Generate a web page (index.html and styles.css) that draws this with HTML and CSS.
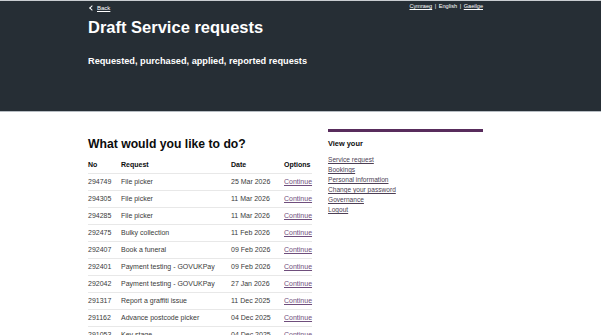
FILE: index.html
```html
<!DOCTYPE html>
<html lang="en">
<head>
  <meta charset="UTF-8" />
  <title>Draft Service requests</title>
  <meta name="viewport" content="width=device-width, initial-scale=1.0" />
  <link rel="stylesheet" href="styles.css">
</head>
<body>

  <header class="page-header">
    <div class="wrap">
      <div class="top-row">
        <a class="back-link" href="#">Back</a>
        <div class="lang-links">
          <a href="#">Cymraeg</a> <span class="sep">|</span> <span>English</span> <span class="sep">|</span> <a href="#">Gaeilge</a>
        </div>
      </div>
      <h1>Draft Service requests</h1>
      <p class="lead">Requested, purchased, applied, reported requests</p>
    </div>
  </header>

  <div class="wrap main">
    <div class="content">
      <h2>What would you like to do?</h2>

      <table class="requests">
        <thead>
          <tr>
            <th class="col-no">No</th>
            <th class="col-req">Request</th>
            <th class="col-date">Date</th>
            <th class="col-opt">Options</th>
          </tr>
        </thead>
        <tbody>
          <tr><td>294749</td><td>File picker</td><td>25 Mar 2026</td><td><a href="#">Continue</a></td></tr>
          <tr><td>294305</td><td>File picker</td><td>11 Mar 2026</td><td><a href="#">Continue</a></td></tr>
          <tr><td>294285</td><td>File picker</td><td>11 Mar 2026</td><td><a href="#">Continue</a></td></tr>
          <tr><td>292475</td><td>Bulky collection</td><td>11 Feb 2026</td><td><a href="#">Continue</a></td></tr>
          <tr><td>292407</td><td>Book a funeral</td><td>09 Feb 2026</td><td><a href="#">Continue</a></td></tr>
          <tr><td>292401</td><td>Payment testing - GOVUKPay</td><td>09 Feb 2026</td><td><a href="#">Continue</a></td></tr>
          <tr><td>292042</td><td>Payment testing - GOVUKPay</td><td>27 Jan 2026</td><td><a href="#">Continue</a></td></tr>
          <tr><td>291317</td><td>Report a graffiti issue</td><td>11 Dec 2025</td><td><a href="#">Continue</a></td></tr>
          <tr><td>291162</td><td>Advance postcode picker</td><td>04 Dec 2025</td><td><a href="#">Continue</a></td></tr>
          <tr><td>291053</td><td>Key stage</td><td>04 Dec 2025</td><td><a href="#">Continue</a></td></tr>
        </tbody>
      </table>
    </div>

    <aside class="sidebar">
      <h3>View your</h3>
      <ul class="side-links">
        <li><a href="#">Service request</a></li>
        <li><a href="#">Bookings</a></li>
        <li><a href="#">Personal information</a></li>
        <li><a href="#">Change your password</a></li>
        <li><a href="#">Governance</a></li>
        <li><a href="#">Logout</a></li>
      </ul>
    </aside>
  </div>

</body>
</html>
```

FILE: styles.css
```css
body {
  font-family: "Liberation Sans", Arial, sans-serif;
  margin: 0;
  padding: 0;
  background: #fff;
  color: #3a3a3a;
}

.wrap {
  width: 395px;
  margin-left: 88px;
}

.page-header {
  background: #262e35;
  color: #fff;
  height: 110px;
  border-top: 1px solid #c9cdd1;
  border-bottom: 1px solid #b7bdc3;
}

.top-row {
  display: flex;
  justify-content: space-between;
  align-items: flex-start;
  height: 15px;
}

.back-link {
  color: #fff;
  font-size: 6px;
  line-height: 8px;
  margin-top: 3px;
  text-decoration: underline;
  display: flex;
  align-items: center;
  gap: 3px;
}

.back-link::before {
  content: "";
  width: 3px;
  height: 3px;
  border-left: 1px solid #fff;
  border-bottom: 1px solid #fff;
  transform: rotate(45deg);
  margin-left: 2px;
}

.lang-links {
  font-size: 5.6px;
  line-height: 8px;
  margin-top: 1px;
  color: #fff;
}

.lang-links a {
  color: #fff;
}

.lang-links .sep {
  margin: 0 1px;
}

.page-header h1 {
  font-size: 16.5px;
  line-height: 20px;
  margin: 1px 0 0;
  font-weight: bold;
}

.lead {
  font-size: 9.2px;
  line-height: 12px;
  font-weight: bold;
  margin: 18px 0 0;
}

.main {
  display: flex;
  gap: 16px;
  padding-top: 18px;
}

.content {
  width: 224px;
}

.content h2 {
  font-size: 12.2px;
  line-height: 16px;
  margin: 6px 0 0;
  color: #0b0c0c;
}

.requests {
  width: 224px;
  border-collapse: collapse;
  margin-top: 5px;
  font-size: 7px;
  table-layout: fixed;
}

.requests th,
.requests td {
  text-align: left;
  padding: 0;
  line-height: 16px;
  border-bottom: 1px solid #e8e8e8;
  white-space: nowrap;
}

.requests th {
  color: #0b0c0c;
  font-weight: bold;
}

.col-no { width: 33px; }
.col-req { width: 110px; }
.col-date { width: 53px; }
.col-opt { width: 28px; }

.requests a {
  color: #6f4e7c;
}

.sidebar {
  width: 155px;
  border-top: 3px solid #582c5c;
  margin-top: -1px;
}

.sidebar h3 {
  font-size: 7.4px;
  line-height: 10px;
  margin: 7px 0 0;
  color: #0b0c0c;
}

.side-links {
  list-style: none;
  margin: 6px 0 0;
  padding: 0;
  font-size: 6.6px;
  line-height: 10px;
}

.side-links a {
  color: #4d3f55;
}
```
